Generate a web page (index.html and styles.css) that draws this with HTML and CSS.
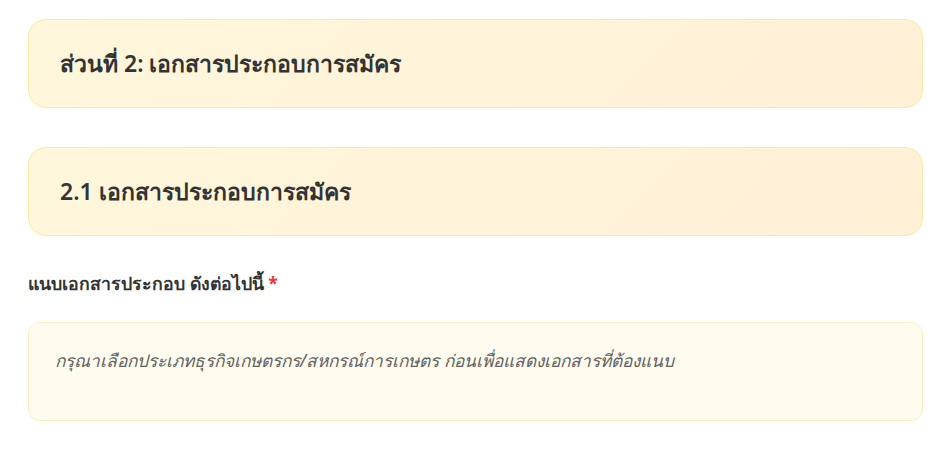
FILE: index.html
```html
<!DOCTYPE html>
<html lang="th">
<head>
<meta charset="utf-8">
<link rel="stylesheet" href="styles.css">
</head>
<body>
<div class="page">
  <div class="section-card">
    <h2 class="section-title">ส่วนที่ 2: เอกสารประกอบการสมัคร</h2>
  </div>
  <div class="section-card sub">
    <h3 class="section-title">2.1 เอกสารประกอบการสมัคร</h3>
  </div>
  <div class="field">
    <label class="field-label">แนบเอกสารประกอบ ดังต่อไปนี้ <span class="req">*</span></label>
    <div class="notice">
      <p class="notice-text">กรุณาเลือกประเภทธุรกิจเกษตรกร/สหกรณ์การเกษตร ก่อนเพื่อแสดงเอกสารที่ต้องแนบ</p>
    </div>
  </div>
</div>
</body>
</html>
```

FILE: styles.css
```css
html, body {
  margin: 0;
  padding: 0;
  background: #ffffff;
}
body {
  font-family: "Noto Sans", "Open Sans", sans-serif;
  color: #333333;
}
.page {
  padding: 19px 26px 0 28px;
  display: flex;
  flex-direction: column;
}
.section-card {
  height: 89px;
  box-sizing: border-box;
  border: 1px solid #fde8a6;
  border-radius: 18px;
  background: linear-gradient(135deg, #fff7dc 0%, #fff0d6 100%);
  display: flex;
  align-items: center;
  padding: 0 31px;
  margin-bottom: 39px;
}
.section-card.sub {
  margin-bottom: 33px;
}
.section-title {
  margin: 0;
  font-size: 23px;
  font-weight: 600;
  color: #333333;
}
.field {
  display: flex;
  flex-direction: column;
}
.field-label {
  font-size: 17.7px;
  font-weight: 700;
  color: #333333;
  line-height: 26px;
  margin-top: 1px;
}
.req {
  color: #e53935;
}
.notice {
  margin-top: 26px;
  height: 99px;
  box-sizing: border-box;
  border: 1px solid #fdefc2;
  border-radius: 12px;
  background: #fffcef;
  padding: 24px 26px;
}
.notice-text {
  margin: 0;
  font-size: 17.25px;
  font-style: italic;
  color: #616161;
  line-height: 28px;
}
```
